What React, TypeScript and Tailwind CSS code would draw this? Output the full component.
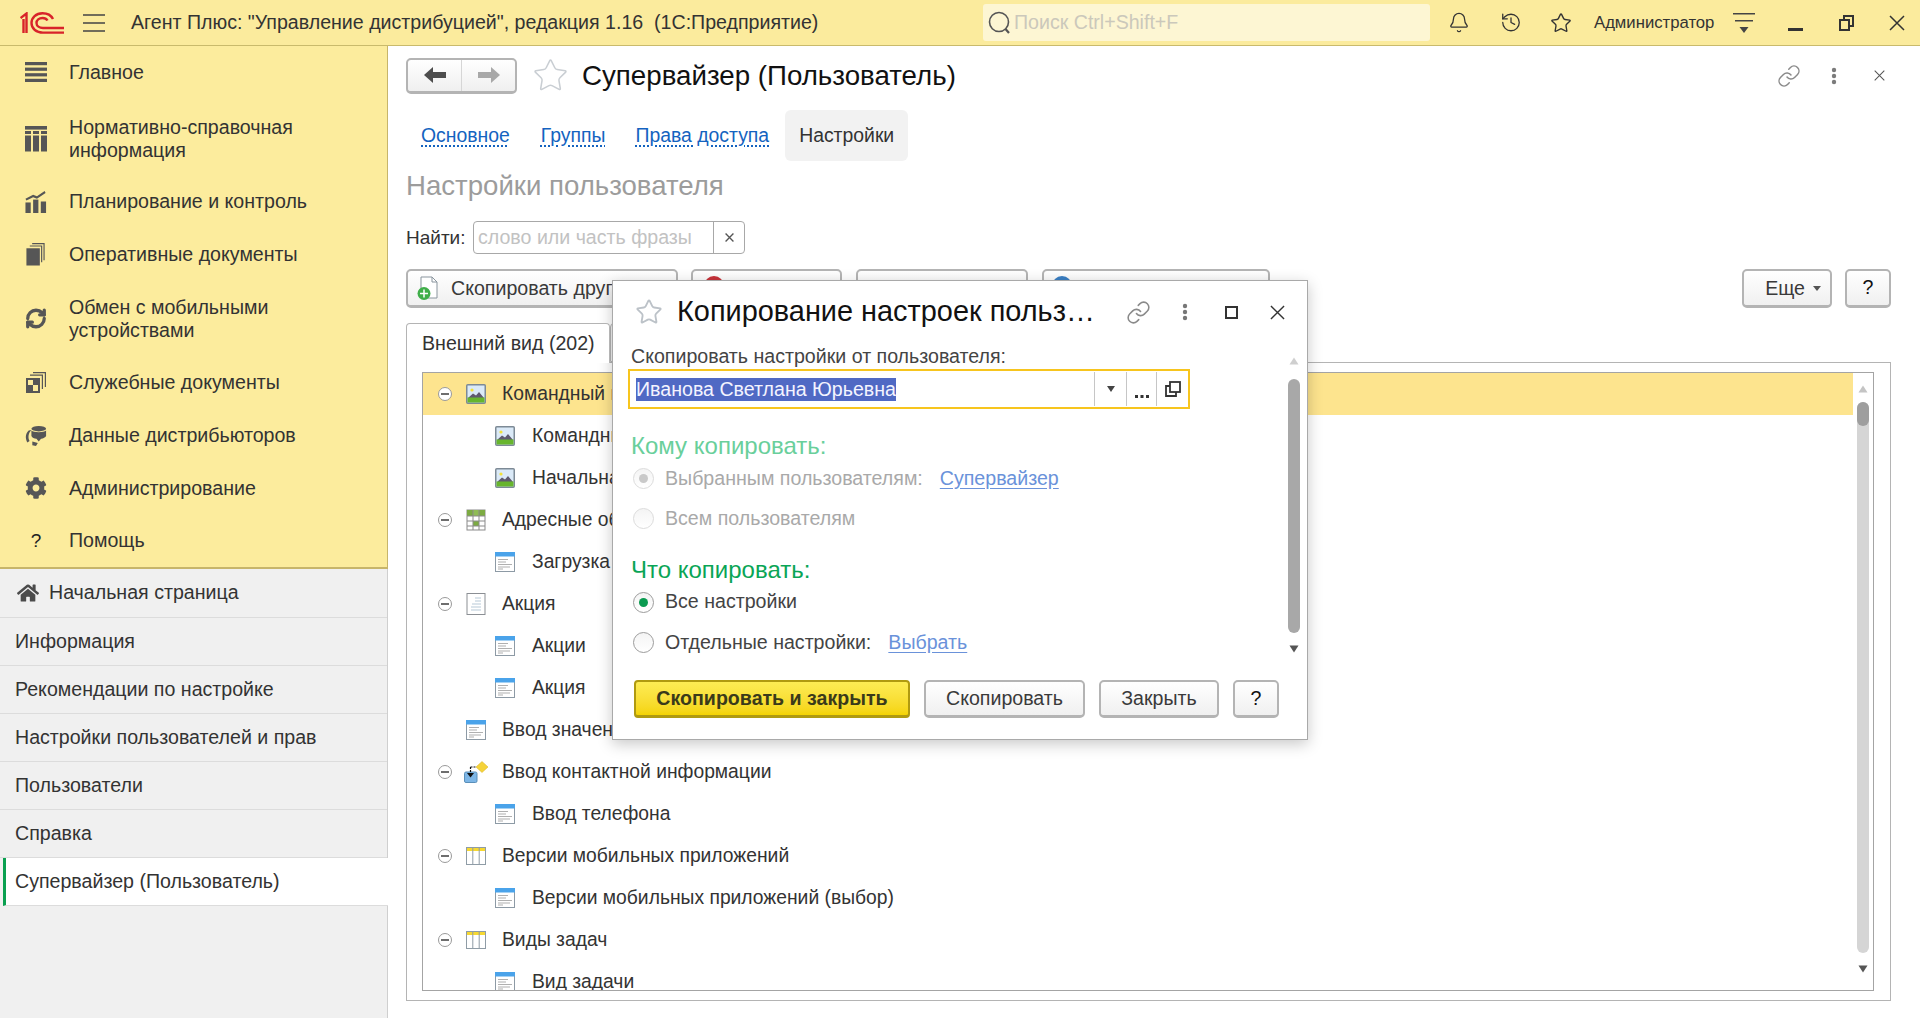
import { Bell, History, Star, Link, RefreshCw } from 'lucide-react';
import { FaCog, FaHome } from 'react-icons/fa';

const menuItems = [
  { icon: 'main', label: ['Главное'], pad: 'pb-[17px]' },
  { icon: 'nsi', label: ['Нормативно-справочная', 'информация'], pad: 'pb-[13.5px]' },
  { icon: 'plan', label: ['Планирование и контроль'], pad: 'pb-[15.6px]' },
  { icon: 'docs', label: ['Оперативные документы'], pad: '' },
  { icon: 'sync', label: ['Обмен с мобильными', 'устройствами'], pad: '' },
  { icon: 'service', label: ['Служебные документы'], pad: '' },
  { icon: 'dist', label: ['Данные дистрибьюторов'], pad: '' },
  { icon: 'gear', label: ['Администрирование'], pad: '' },
  { icon: 'help', label: ['Помощь'], pad: '' },
];

const openItems = [
  'Информация',
  'Рекомендации по настройке',
  'Настройки пользователей и прав',
  'Пользователи',
  'Справка',
];

const treeRows = [
  { level: 0, icon: 'pic', text: 'Командный интерфейс', selected: true },
  { level: 1, icon: 'pic', text: 'Командный интерфейс' },
  { level: 1, icon: 'pic', text: 'Начальная страница' },
  { level: 0, icon: 'grid', text: 'Адресные объекты' },
  { level: 1, icon: 'form', text: 'Загрузка адресов' },
  { level: 0, icon: 'page', text: 'Акция' },
  { level: 1, icon: 'form', text: 'Акции' },
  { level: 1, icon: 'form', text: 'Акция' },
  { level: 0, icon: 'form', text: 'Ввод значений', leaf: true },
  { level: 0, icon: 'input', text: 'Ввод контактной информации' },
  { level: 1, icon: 'form', text: 'Ввод телефона' },
  { level: 0, icon: 'table', text: 'Версии мобильных приложений' },
  { level: 1, icon: 'form', text: 'Версии мобильных приложений (выбор)' },
  { level: 0, icon: 'table', text: 'Виды задач' },
  { level: 1, icon: 'form', text: 'Вид задачи' },
];

function Logo() {
  return (
    <svg width="44" height="22" viewBox="0 0 44 22" fill="none" stroke="#d8232a" strokeWidth="2.4">
      <path d="M0.5 6 L6.5 1.5 V21 M3.5 7 V21" />
      <path d="M33 7 C31 3 27 1.2 22.5 1.2 C16 1.2 11.5 5.5 11.5 11 C11.5 17 16.5 20.6 23 20.6 H44" />
      <path d="M27.5 8.5 C26.5 6.8 24.5 6 22.5 6 C19 6 16.5 8 16.5 11 C16.5 14 19.5 16 23 16 H44" />
    </svg>
  );
}

function MenuIcon({ name }: { name: string }) {
  const c = '#565656';
  if (name === 'main')
    return (
      <svg width="22" height="22" viewBox="0 0 22 22" fill={c}>
        <rect y="1" width="22" height="3.2" />
        <rect y="6.6" width="22" height="3.2" />
        <rect y="12.2" width="22" height="3.2" />
        <rect y="17.8" width="22" height="3.2" />
      </svg>
    );
  if (name === 'nsi')
    return (
      <svg width="22" height="26" viewBox="0 0 22 26" fill={c}>
        <rect y="0" width="22" height="3.6" />
        <rect y="5" width="6" height="3" />
        <rect x="8" y="5" width="6" height="3" />
        <rect x="16" y="5" width="6" height="3" />
        <rect y="9.5" width="6" height="16" />
        <rect x="8" y="9.5" width="6" height="16" />
        <rect x="16" y="9.5" width="6" height="16" />
      </svg>
    );
  if (name === 'plan')
    return (
      <svg width="22" height="23" viewBox="0 0 22 24" fill={c}>
        <rect x="0" y="13" width="5.5" height="11" />
        <rect x="8" y="10" width="5.5" height="14" />
        <rect x="16" y="12" width="5.5" height="12" />
        <path d="M0 9 L8 5 L12 6.5 L20 1 L21 3 L12 9 L8 7.5 L1 11 Z" />
      </svg>
    );
  if (name === 'docs')
    return (
      <svg width="22" height="23" viewBox="0 0 22 24" fill={c}>
        <path d="M7 0 H20 V18 H18.8 V1.2 H7 Z" />
        <path d="M4.5 2.5 H17.5 V20 H16.3 V3.7 H4.5 Z" />
        <rect x="1" y="5.5" width="14" height="18" />
      </svg>
    );
  if (name === 'sync') return <RefreshCw size={23} color={c} strokeWidth={3.6} />;
  if (name === 'service')
    return (
      <svg width="22" height="22" viewBox="0 0 22 22" fill={c}>
        <path d="M8 0 H21 V15 H19.8 V1.2 H8 Z" />
        <path d="M5 2.5 H18 V17 H16.8 V3.7 H5 Z" />
        <path d="M1 6 H15 V21 H1 Z M3 8 V13 H8 V8 Z M8 13 V19 H13 V13 Z" fillRule="evenodd" />
      </svg>
    );
  if (name === 'dist')
    return (
      <svg width="24" height="22" viewBox="0 0 24 22" fill={c}>
        <ellipse cx="15" cy="3" rx="8" ry="3" />
        <path d="M7 5 C9 7.5 21 7.5 23 5 V11 C21 14 17.5 14 17.5 14 L15 17 L12.5 14 C10 14 8 13 7 11 Z" />
        <path d="M4 5 L7 4.5 C3.5 8 3 13 5 16.5 L2.5 18 C0 13 0.5 8.5 4 5 Z" />
        <path d="M8 17 L14 18.5 L12 22 L8 21 Z" />
      </svg>
    );
  if (name === 'gear') return <FaCog size={22} color={c} />;
  return <span className="text-[19px] text-[#222]">?</span>;
}

function TreeIcon({ name }: { name: string }) {
  if (name === 'pic')
    return (
      <svg width="20" height="20" viewBox="0 0 20 20">
        <rect x="0.75" y="0.75" width="18.5" height="18.5" rx="1" fill="#dbeaf8" stroke="#7d8a96" strokeWidth="1.5" />
        <circle cx="6" cy="6" r="1.6" fill="#f2e23a" />
        <path d="M2 14 L7 9.5 L10 11.5 L13 8 L18 14 Z" fill="#5f5a6e" />
        <rect x="1.5" y="13.5" width="17" height="5" fill="#67b52d" />
      </svg>
    );
  if (name === 'grid')
    return (
      <svg width="20" height="22" viewBox="0 0 20 22" fill="none" stroke="#8b8b8b">
        <rect x="1" y="1" width="18" height="20" fill="#fff" />
        <rect x="1" y="1" width="6" height="6" fill="#7cab42" stroke="none" />
        <rect x="7" y="1" width="6" height="6" fill="#8fbc55" stroke="none" />
        <rect x="13" y="1" width="6" height="6" fill="#7cab42" stroke="none" />
        <rect x="7" y="12" width="6" height="5" fill="#7cab42" stroke="none" />
        <path d="M1 7 H19 M1 12 H19 M1 17 H19 M7 1 V21 M13 1 V21" />
      </svg>
    );
  if (name === 'form')
    return (
      <svg width="20" height="20" viewBox="0 0 20 20">
        <rect x="0.5" y="0.5" width="19" height="19" fill="#fff" stroke="#8d9aa5" />
        <rect x="0" y="0" width="20" height="4.5" fill="#4aa3ea" />
        <path d="M3 7.5 H13 M3 10 H11 M3 12.5 H17 M3 15 H15 M3 17 H8" stroke="#b0b0b0" strokeWidth="1.1" />
      </svg>
    );
  if (name === 'page')
    return (
      <svg width="20" height="22" viewBox="0 0 20 22">
        <rect x="1" y="0.5" width="18" height="21" fill="#fff" stroke="#8b8f94" />
        <path d="M9 5 H15 M9 8 H15 M6 11 H15 M5 14 H15 M5 17 H15" stroke="#b7c9d8" strokeWidth="1.2" />
      </svg>
    );
  if (name === 'table')
    return (
      <svg width="20" height="18" viewBox="0 0 20 18">
        <rect x="0.5" y="0.5" width="19" height="17" fill="#fff" stroke="#8f9ca6" />
        <rect x="1" y="1" width="18" height="3" fill="#f6d832" />
        <path d="M6.8 1 V17 M13.2 1 V17" stroke="#8f9ca6" />
      </svg>
    );
  return (
    <svg className="-ml-[2px]" width="24" height="22" viewBox="0 0 24 22">
      <path d="M12 6 L18 0.5 L24 6 L18 11.5 Z" fill="#f5d33a" stroke="#d6b020" strokeWidth="0.5" />
      <rect x="0.5" y="11" width="12.5" height="10.5" rx="1.5" fill="#7db6e6" stroke="#5a8fb9" />
      <path d="M6.5 6 V14" stroke="#111" strokeWidth="1.2" strokeDasharray="2 1" fill="none" />
      <path d="M6.5 6 H12" stroke="#111" strokeWidth="1.2" strokeDasharray="2 1" fill="none" />
      <path d="M3 12 H10 L6.5 16.5 Z" fill="#111" />
    </svg>
  );
}

function Kebab({ color }: { color: string }) {
  return (
    <svg width="6" height="18" viewBox="0 0 6 18" fill={color}>
      <circle cx="3" cy="3" r="2.2" />
      <circle cx="3" cy="9" r="2.2" />
      <circle cx="3" cy="15" r="2.2" />
    </svg>
  );
}

function Cross({ size, color, width = 1.5 }: { size: number; color: string; width?: number }) {
  return (
    <svg width={size} height={size} viewBox="0 0 16 16" stroke={color} strokeWidth={width}>
      <path d="M1 1 L15 15 M15 1 L1 15" />
    </svg>
  );
}

function Btn({ children, className }: { children?: React.ReactNode; className: string }) {
  return (
    <div
      className={`flex items-center rounded-[5px] border-2 border-b-[3px] border-[#b4b4b4] bg-linear-to-b from-white to-[#f0f0f0] text-[19.6px] text-[#3a3a3a] ${className}`}
    >
      {children}
    </div>
  );
}

function Radio({ on, disabled }: { on?: boolean; disabled?: boolean }) {
  return (
    <span
      className={`flex h-[21px] w-[21px] shrink-0 items-center justify-center rounded-full border bg-linear-to-b from-[#f4f4f4] to-white ${
        disabled ? 'border-[#dcdcdc]' : 'border-[#9c9c9c]'
      }`}
    >
      {on && <span className={`h-[9px] w-[9px] rounded-full ${disabled ? 'bg-[#c9c9c9]' : 'bg-[#0a9a50]'}`} />}
    </span>
  );
}

function Triangle({ color, up }: { color: string; up?: boolean }) {
  return (
    <svg width="10" height="8" viewBox="0 0 10 8" fill={color}>
      <path d={up ? 'M5 0.5 L9.5 7.5 H0.5 Z' : 'M0.5 0.5 H9.5 L5 7.5 Z'} />
    </svg>
  );
}

export default function App() {
  return (
    <div className="relative flex h-[1018px] w-[1920px] flex-col overflow-hidden bg-white font-['Liberation_Sans',sans-serif] text-[19.6px] text-[#333]">
      {/* Header */}
      <header className="flex h-[46px] shrink-0 items-center border-b border-[#c9ba6c] bg-[#fbeb9d]">
        <div className="ml-[20px] flex w-[63px] items-center">
          <Logo />
        </div>
        <svg width="22" height="18" viewBox="0 0 22 18" stroke="#444" strokeWidth="1.4">
          <path d="M0 1 H22 M0 9 H22 M0 17 H22" />
        </svg>
        <span className="ml-[26px] w-[852px] whitespace-pre text-[#333]">
          Агент Плюс: "Управление дистрибуцией", редакция 1.16  (1С:Предприятие)
        </span>
        <div className="flex h-[37px] w-[447px] items-center rounded-[3px] bg-[#fdf6d3] pl-[4px]">
          <svg width="24" height="26" viewBox="0 0 24 26" fill="none" stroke="#555" strokeWidth="1.6">
            <circle cx="12" cy="12" r="9.5" />
            <path d="M18.5 19 L22 23" strokeWidth="2.2" />
          </svg>
          <span className="ml-[3px] text-[#cbc8bb]">Поиск Ctrl+Shift+F</span>
        </div>
        <div className="ml-[18px] flex w-[22px] justify-center">
          <Bell size={25} color="#333" strokeWidth={1.4} />
        </div>
        <div className="ml-[30px] flex w-[22px] justify-center">
          <History size={25} color="#333" strokeWidth={1.4} />
        </div>
        <div className="ml-[28px] flex w-[22px] justify-center">
          <Star size={24} color="#333" strokeWidth={1.5} />
        </div>
        <span className="ml-[22px] w-[120px] whitespace-nowrap text-[16.7px] text-[#333]">Администратор</span>
        <svg className="ml-[19px]" width="22" height="24" viewBox="0 0 22 24" fill="#444">
          <rect y="2" width="22" height="1.5" />
          <rect x="2" y="9" width="18" height="1.5" />
          <path d="M6.5 16 H15.5 L11 22 Z" />
        </svg>
        <span className="ml-[33px] mt-[14px] h-[3px] w-[15px] bg-[#333]" />
        <svg className="ml-[36px]" width="15" height="16" viewBox="0 0 15 16" fill="none" stroke="#333" strokeWidth="2">
          <rect x="1" y="5" width="9" height="10" />
          <path d="M5 5 V1 H14 V11 H10" />
        </svg>
        <div className="ml-[35px]">
          <Cross size={16} color="#333" />
        </div>
      </header>

      <div className="flex min-h-0 flex-1">
        {/* Sidebar */}
        <aside className="flex w-[388px] shrink-0 flex-col border-r border-[#cfcfcf] bg-[#f0f0f0]">
          <nav className="-mr-px h-[523px] border-r border-b-2 border-[#c7b56a] bg-[#fcec9d]">
            {menuItems.map((item) => (
              <div key={item.icon} className={`flex items-center py-[14.8px] pl-[25px] leading-[23px] text-[#333] ${item.pad}`}>
                <span className="flex w-[44px] shrink-0 justify-center pr-[22px]">
                  <MenuIcon name={item.icon} />
                </span>
                <div>
                  {item.label.map((line) => (
                    <div key={line}>{line}</div>
                  ))}
                </div>
              </div>
            ))}
          </nav>
          <div className="flex h-[49px] items-center border-b border-[#dcdcdc] pl-[17px] text-[#333]">
            <FaHome size={22} color="#4b4b4b" />
            <span className="ml-[10px]">Начальная страница</span>
          </div>
          {openItems.map((t) => (
            <div key={t} className="flex h-[48px] items-center border-b border-[#dcdcdc] pl-[15px]">
              {t}
            </div>
          ))}
          <div className="-mr-px ml-[3px] flex h-[48px] items-center border-b border-l-[3px] border-[#dcdcdc] border-l-[#0aa050] bg-white pl-[9px]">
            Супервайзер (Пользователь)
          </div>
        </aside>

        {/* Main */}
        <main className="flex min-w-0 flex-1 flex-col pl-[18px] pr-[29px] pt-[12px]">
          <div className="flex h-[35px] items-center">
            <div className="flex h-[36px] w-[111px] items-center rounded-[5px] border-2 border-b-[3px] border-[#b4b4b4] bg-linear-to-b from-white to-[#efefef]">
              <div className="flex h-full w-[54px] items-center justify-center border-r border-[#d6d6d6]">
                <svg width="22" height="16" viewBox="0 0 22 16" fill="#4d4d4d">
                  <path d="M0 8 L9 0 V5 H22 V11 H9 V16 Z" />
                </svg>
              </div>
              <div className="flex flex-1 justify-center">
                <svg width="22" height="16" viewBox="0 0 22 16" fill="#a8a8a8">
                  <path d="M22 8 L13 0 V5 H0 V11 H13 V16 Z" />
                </svg>
              </div>
            </div>
            <Star className="ml-[15px]" size={37} color="#c9ced3" strokeWidth={1} />
            <h1 className="ml-[13px] pt-px text-[27.7px] text-[#111]">Супервайзер (Пользователь)</h1>
            <div className="ml-auto mr-[6px] flex items-center">
              <Link size={24} color="#8a8a8a" strokeWidth={1.5} />
              <span className="ml-[30px]">
                <Kebab color="#7b7b7b" />
              </span>
              <span className="ml-[37px]">
                <Cross size={11} color="#555" />
              </span>
            </div>
          </div>

          <div className="mt-[17px] flex h-[51px] items-center pl-[15px] text-[19.4px]">
            <a className="text-[#1463c0] underline decoration-dotted underline-offset-[4px]">Основное</a>
            <a className="ml-[31px] text-[#1463c0] underline decoration-dotted underline-offset-[4px]">Группы</a>
            <a className="ml-[30px] text-[#1463c0] underline decoration-dotted underline-offset-[4px]">Права доступа</a>
            <span className="ml-[16px] flex h-full items-center rounded-[6px] bg-[#f2f2f2] px-[14px] text-[#333]">Настройки</span>
          </div>

          <h2 className="mt-[7px] text-[27.6px] leading-[36px] text-[#9c9c9c]">Настройки пользователя</h2>

          <div className="mt-[17px] flex h-[33px] items-center">
            <span className="w-[67px] pt-px text-[19px]">Найти:</span>
            <div className="flex h-full w-[272px] items-center rounded-[4px] border border-[#a8a8a8]">
              <span className="flex-1 whitespace-nowrap pl-[4px] pt-px text-[#c2c2c2]">слово или часть фразы</span>
              <span className="flex h-full w-[31px] items-center justify-center border-l border-[#a8a8a8]">
                <Cross size={9} color="#555" width={2.4} />
              </span>
            </div>
          </div>

          <div className="mt-[15px] flex h-[39px]">
            <Btn className="w-[272px] pl-[9px]">
              <svg width="22" height="24" viewBox="0 0 22 24">
                <path d="M4 1 H15 L20 6 V22 H4 Z" fill="#fff" stroke="#8a959e" />
                <path d="M15 1 V6 H20" fill="none" stroke="#8a959e" />
                <circle cx="7" cy="17.5" r="6.5" fill="#3fae49" />
                <path d="M7 13.5 V21.5 M3 17.5 H11" stroke="#fff" strokeWidth="1.5" />
              </svg>
              <span className="ml-[12px] whitespace-nowrap pt-px">Скопировать другим</span>
            </Btn>
            <Btn className="ml-[13px] w-[151px] items-start pl-[11px] pt-[5px]">
              <span className="h-[20px] w-[20px] rounded-full bg-[#c8323a]" />
            </Btn>
            <Btn className="ml-[14px] w-[172px]" />
            <Btn className="ml-[14px] w-[228px] items-start pl-[8px] pt-[5px]">
              <span className="h-[20px] w-[20px] rounded-full bg-[#3a7fc4]" />
            </Btn>
            <Btn className="ml-auto w-[90px] justify-end pr-[9px]">
              <span className="pt-px">Еще</span>
              <svg className="ml-[8px]" width="8" height="5" viewBox="0 0 8 5" fill="#555">
                <path d="M0 0 H8 L4 5 Z" />
              </svg>
            </Btn>
            <Btn className="ml-[13px] w-[46px] justify-center text-[#111]">?</Btn>
          </div>

          <div className="mt-[15px] flex h-[39px]">
            <div className="relative z-10 -mb-px flex w-[204px] items-center rounded-t-[4px] border border-b-0 border-[#b4b4b4] bg-white pl-[15px]">
              Внешний вид (202)
            </div>
            <div className="h-[39px] w-[40px] rounded-t-[4px] border border-[#b4b4b4] bg-[#f1f1f1]" />
          </div>
          <div className="flex h-[639px] flex-col border border-[#b4b4b4] pb-[9px] pl-[15px] pr-[16px] pt-[9px]">
            <div className="flex min-h-0 flex-1 border border-[#a4a4a4]">
              <div className="min-w-0 flex-1 overflow-hidden">
                {treeRows.map((r, i) => (
                  <div
                    key={i}
                    className={`flex h-[42px] shrink-0 items-center whitespace-nowrap text-[19.3px] ${r.selected ? 'bg-[#fde48e]' : ''} ${
                      r.level === 1 ? 'pl-[72px]' : 'pl-[15px]'
                    }`}
                  >
                    {r.level === 0 && !r.leaf && (
                      <span className="flex h-[14px] w-[14px] shrink-0 items-center justify-center rounded-full border border-[#9a9a9a] bg-white">
                        <span className="h-[2px] w-[8px] bg-[#6e6e6e]" />
                      </span>
                    )}
                    {r.leaf && <span className="w-[14px] shrink-0" />}
                    <span className={`flex shrink-0 ${r.level === 0 ? 'ml-[14px] w-[36px]' : 'w-[37px]'}`}>
                      <TreeIcon name={r.icon} />
                    </span>
                    <span className="text-[#333]">{r.text}</span>
                  </div>
                ))}
              </div>
              <div className="flex w-[20px] shrink-0 flex-col items-center pt-[12px]">
                <Triangle color="#c4c4c4" up />
                <div className="mt-[9px] flex h-[551px] w-[12px] flex-col rounded-full bg-[#d5d5d5]">
                  <div className="h-[24px] rounded-full bg-[#9e9e9e]" />
                </div>
                <div className="mt-[12px]">
                  <Triangle color="#555" />
                </div>
              </div>
            </div>
          </div>
        </main>
      </div>

      {/* Dialog */}
      <div className="absolute left-[612px] top-[280px] flex h-[460px] w-[696px] flex-col border border-[#a9a9a9] bg-white shadow-[0_4px_14px_rgba(0,0,0,0.22)]">
        <div className="flex h-[62px] shrink-0 items-center pl-[22px]">
          <Star size={28} color="#bcc2c8" strokeWidth={1.6} />
          <span className="ml-[14px] w-[446px] whitespace-nowrap text-[28.9px] text-[#111]">Копирование настроек польз…</span>
          <Link size={25} color="#8a8a8a" strokeWidth={1.5} className="ml-[3px]" />
          <span className="ml-[31px]">
            <Kebab color="#777" />
          </span>
          <span className="ml-[37px] h-[13px] w-[13px] border-2 border-[#333]" />
          <span className="ml-[32px]">
            <Cross size={15} color="#333" />
          </span>
        </div>
        <div className="flex h-[317px] shrink-0">
          <div className="min-w-0 flex-1 pl-[15px]">
            <div className="h-[26px] pl-[3px] leading-[26px] text-[#444]">Скопировать настройки от пользователя:</div>
            <div className="flex h-[40px] w-[562px] items-center border-2 border-[#f7c51e] pl-[6px]">
              <span className="flex flex-1">
                <span className="bg-[#5069c4] leading-[23px] text-[#f4f4ff]">Иванова Светлана Юрьевна</span>
              </span>
              <span className="flex h-[34px] w-[32px] items-center justify-center border-l border-[#c6c6c6]">
                <svg width="8" height="6" viewBox="0 0 8 6" fill="#444">
                  <path d="M0 0 H8 L4 6 Z" />
                </svg>
              </span>
              <span className="flex h-[34px] w-[30px] items-end justify-center border-l border-[#c6c6c6] pb-[8px]">
                <svg width="14" height="3" viewBox="0 0 14 3" fill="#333">
                  <rect width="3" height="3" />
                  <rect x="5.5" width="3" height="3" />
                  <rect x="11" width="3" height="3" />
                </svg>
              </span>
              <span className="flex h-[34px] w-[32px] items-center justify-center border-l border-[#c6c6c6]">
                <svg width="16" height="16" viewBox="0 0 16 16" fill="none" stroke="#333" strokeWidth="1.8">
                  <rect x="5" y="1" width="10" height="10" />
                  <path d="M5 5 H1 V15 H11 V11" />
                </svg>
              </span>
            </div>

            <div className="mt-[22px] pl-[3px] text-[24px] leading-[30px] text-[#69cf9b]">Кому копировать:</div>
            <div className="flex h-[34px] items-center pl-[5px] text-[#a9a9a9]">
              <Radio on disabled />
              <span className="ml-[11px] pt-px">Выбранным пользователям:</span>
              <a className="ml-[17px] pt-px text-[#6a92da] underline underline-offset-[3px]">Супервайзер</a>
            </div>
            <div className="mt-[6px] flex h-[34px] items-center pl-[5px] text-[#a9a9a9]">
              <Radio disabled />
              <span className="ml-[11px] pt-px">Всем пользователям</span>
            </div>

            <div className="mt-[20px] pl-[3px] text-[24px] leading-[30px] text-[#0aa556]">Что копировать:</div>
            <div className="flex h-[34px] items-center pl-[5px] text-[#444]">
              <Radio on />
              <span className="ml-[11px]">Все настройки</span>
            </div>
            <div className="mt-[6px] flex h-[34px] items-center pl-[5px] text-[#444]">
              <Radio />
              <span className="ml-[11px] pt-px">Отдельные настройки:</span>
              <a className="ml-[17px] pt-px text-[#6a92da] underline underline-offset-[3px]">Выбрать</a>
            </div>
          </div>
          <div className="mr-[7px] flex w-[12px] shrink-0 flex-col items-center pt-[14px]">
            <Triangle color="#cfcfcf" up />
            <div className="mt-[14px] h-[254px] w-[12px] rounded-full bg-[#a8a8a8]" />
            <div className="mt-[12px]">
              <Triangle color="#555" />
            </div>
          </div>
        </div>
        <div className="mt-[20px] flex h-[38px] pl-[21px]">
          <div className="flex w-[276px] items-center justify-center rounded-[4px] border-2 border-b-[3px] border-[#b09a10] bg-linear-to-b from-[#fdec53] to-[#f5d400] pt-px font-bold text-[#3a3a1a]">
            Скопировать и закрыть
          </div>
          <Btn className="ml-[14px] w-[161px] justify-center pt-px">Скопировать</Btn>
          <Btn className="ml-[14px] w-[120px] justify-center pt-px">Закрыть</Btn>
          <Btn className="ml-[14px] w-[46px] justify-center text-[#111]">?</Btn>
        </div>
      </div>
    </div>
  );
}
